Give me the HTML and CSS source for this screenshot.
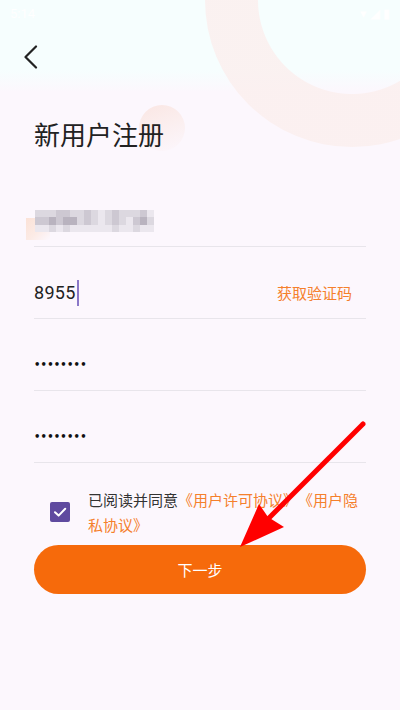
FILE: index.html
```html
<!DOCTYPE html>
<html lang="zh">
<head>
<meta charset="utf-8">
<title>新用户注册</title>
<link rel="stylesheet" href="styles.css">
</head>
<body>
<div class="screen">
  <div class="deco-ring"></div>
  <div class="deco-dot"></div>

  <div class="statusbar">
    <span class="time">5:14</span>
    <span class="sys">▾ ◢ ▮</span>
  </div>

  <div class="nav">
    <svg class="back" width="14" height="24" viewBox="0 0 14 24">
      <path d="M12 1.5 L1.5 12 L12 22.5" fill="none" stroke="#222" stroke-width="2.2" stroke-linecap="round" stroke-linejoin="round"/>
    </svg>
  </div>

  <main class="content">
    <h1 class="title">新用户注册</h1>

    <div class="field">
      <div class="mosaic">
        <i class="c2"></i><i class="c2"></i><i class="c2"></i><i class="c3"></i><i class="c3"></i><i class="c2"></i><i class="c2"></i><i class="c3"></i><i class="c2"></i><i class="c1"></i><i class="c2"></i><i class="c3"></i><i class="c2"></i><i class="c2"></i><i class="c2"></i><i class="c3"></i><i class="c1"></i>
        <i class="c3"></i><i class="c3"></i><i class="c4"></i><i class="c3"></i><i class="c4"></i><i class="c4"></i><i class="c2"></i><i class="c3"></i><i class="c2"></i><i class="c1"></i><i class="c2"></i><i class="c3"></i><i class="c2"></i><i class="c1"></i><i class="c3"></i><i class="c4"></i><i class="c2"></i>
        <i class="c1"></i><i class="c1"></i><i class="c2"></i><i class="c1"></i><i class="c2"></i><i class="c1"></i><i class="c1"></i><i class="c1"></i><i class="c1"></i><i class="c1"></i><i class="c1"></i><i class="c2"></i><i class="c1"></i><i class="c1"></i><i class="c2"></i><i class="c1"></i><i class="c1"></i>
      </div>
    </div>

    <div class="field">
      <span class="value">8955</span><span class="caret"></span>
      <span class="sms">获取验证码</span>
    </div>

    <div class="field">
      <span class="dots">••••••••</span>
    </div>

    <div class="field">
      <span class="dots">••••••••</span>
    </div>

    <div class="agree">
      <span class="checkbox">
        <svg width="20" height="20" viewBox="0 0 20 20">
          <path d="M5 10.2 L8.6 13.6 L15.2 6.8" fill="none" stroke="#fff" stroke-width="2" stroke-linecap="round" stroke-linejoin="round"/>
        </svg>
      </span>
      <p class="agree-text">已阅读并同意<span class="link">《用户许可协议》《用户隐私协议》</span></p>
    </div>

    <button class="next">下一步</button>
  </main>

  <svg class="annotation" width="400" height="710" viewBox="0 0 400 710">
    <line x1="363" y1="424" x2="266" y2="521" stroke="#ff0000" stroke-width="5" stroke-linecap="round"/>
    <polygon points="240,547 259,504 268,517 284,527" fill="#ff0000"/>
  </svg>
</div>
</body>
</html>
```

FILE: styles.css
```css
* { box-sizing: border-box; }

html, body {
  margin: 0;
  padding: 0;
}

body {
  width: 400px;
  height: 710px;
  overflow: hidden;
  font-family: "Noto Sans CJK SC", "Noto Sans", sans-serif;
  background: #fcf7fd;
}

.screen {
  position: relative;
  width: 400px;
  height: 710px;
  overflow: hidden;
  background: linear-gradient(to bottom, #f6fefe 0, #f6fefe 70px, #fcf7fd 92px, #fcf7fd 100%);
}

.deco-ring {
  position: absolute;
  left: 205px;
  top: -147px;
  width: 294px;
  height: 294px;
  border-radius: 50%;
  background: radial-gradient(circle at center, transparent 93.5px, #fbefee 94.5px);
  opacity: 0.85;
}

.deco-dot {
  position: absolute;
  left: 139px;
  top: 105px;
  width: 46px;
  height: 46px;
  border-radius: 50%;
  background: linear-gradient(160deg, #fae6e3 0%, #fbeeee 45%, rgba(252, 247, 253, 0) 100%);
}

.statusbar {
  position: relative;
  height: 26px;
  display: flex;
  justify-content: space-between;
  align-items: center;
  padding: 0 10px;
  color: #ffffff;
  font-family: Roboto, sans-serif;
  font-size: 13px;
}

.nav {
  position: relative;
  height: 62px;
  display: flex;
  align-items: center;
  padding-left: 24px;
}

.back { display: block; }

.content {
  position: relative;
  padding: 0 34px;
  text-spacing-trim: space-all;
}

.title {
  margin: 28px 0 0;
  font-size: 26px;
  line-height: 36px;
  font-weight: 400;
  color: #222222;
  letter-spacing: 0;
}

.field {
  display: flex;
  align-items: center;
  height: 72px;
  padding-top: 20px;
  border-bottom: 1px solid #e8e5eb;
}

.field:first-of-type { margin-top: 23px; }

.mosaic {
  position: relative;
  display: grid;
  grid-template-columns: repeat(17, 7px);
  grid-auto-rows: 7.5px;
  margin-left: 1px;
  margin-top: 1px;
}

.mosaic::before {
  content: "";
  position: absolute;
  left: -9px;
  top: 8px;
  width: 24px;
  height: 22px;
  background: linear-gradient(135deg, #fbe2d7 0%, #fcebe6 55%, rgba(252, 247, 253, 0) 100%);
}

.mosaic i { display: block; position: relative; }
.mosaic .c1 { background: #ebe7ee; }
.mosaic .c2 { background: #dcd8e0; }
.mosaic .c3 { background: #cdc8d2; }
.mosaic .c4 { background: #b9b3bf; }

.value {
  font-family: Roboto, "Noto Sans", sans-serif;
  font-size: 18px;
  color: #222222;
  letter-spacing: 0.3px;
}

.caret {
  display: inline-block;
  width: 2px;
  height: 26px;
  margin-left: 1px;
  background: #8b78c8;
}

.sms {
  margin-left: auto;
  margin-right: 14px;
  font-size: 15px;
  color: #f5802c;
}

.dots {
  font-family: "DejaVu Sans", sans-serif;
  font-size: 10px;
  letter-spacing: 0.2px;
  color: #111111;
  font-weight: 700;
}

.agree {
  display: flex;
  align-items: center;
  margin-top: 24px;
  padding-left: 16px;
  gap: 18px;
}

.checkbox {
  flex: none;
  width: 20px;
  height: 20px;
  border-radius: 2px;
  background: #5f4a9f;
  display: flex;
  align-items: center;
  justify-content: center;
}

.checkbox svg { display: block; }

.agree-text {
  margin: 0;
  width: 278px;
  font-size: 15px;
  line-height: 25px;
  color: #333333;
  text-spacing-trim: space-all;
  font-feature-settings: "fwid" 1;
}

.link { color: #f5802c; }

.next {
  display: block;
  width: 100%;
  height: 49px;
  margin-top: 8px;
  border: none;
  border-radius: 25px;
  background: #f66a0b;
  color: #ffffff;
  font-family: "Noto Sans CJK SC", sans-serif;
  font-size: 15px;
  padding: 0;
}

.annotation {
  position: absolute;
  left: 0;
  top: 0;
  pointer-events: none;
}
```
